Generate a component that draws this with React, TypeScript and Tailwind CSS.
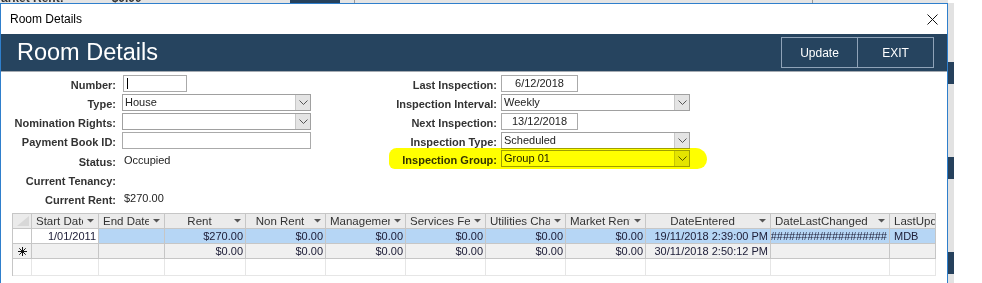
import React from 'react'

type Col = { label: string; w: number; center?: boolean; arrow?: boolean; align?: 'left' | 'right' }

const COLS: Col[] = [
  { label: 'Start Date', w: 67, arrow: true, align: 'right' },
  { label: 'End Date', w: 66, arrow: true, align: 'right' },
  { label: 'Rent', w: 81, center: true, arrow: true, align: 'right' },
  { label: 'Non Rent', w: 80, center: true, arrow: true, align: 'right' },
  { label: 'Management', w: 80, arrow: true, align: 'right' },
  { label: 'Services Fees', w: 80, arrow: true, align: 'right' },
  { label: 'Utilities Charges', w: 80, arrow: true, align: 'right' },
  { label: 'Market Rent', w: 80, arrow: true, align: 'right' },
  { label: 'DateEntered', w: 125, center: true, arrow: true, align: 'right' },
  { label: 'DateLastChanged', w: 119, arrow: true, align: 'right' },
  { label: 'LastUpdatedBy', w: 46, arrow: false, align: 'left' },
]

const ROW1 = ['1/01/2011', '', '$270.00', '$0.00', '$0.00', '$0.00', '$0.00', '$0.00', '19/11/2018 2:39:00 PM', '#####################', 'MDB']
const ROW2 = ['', '', '$0.00', '$0.00', '$0.00', '$0.00', '$0.00', '$0.00', '30/11/2018 2:50:12 PM', '', '']

function Chevron() {
  return (
    <svg width="9" height="5" viewBox="0 0 9 5" className="text-[#555]">
      <polyline points="0.5,0.5 4.5,4.5 8.5,0.5" fill="none" stroke="currentColor" strokeWidth="1" />
    </svg>
  )
}

function SortArrow() {
  return (
    <svg width="7" height="4" viewBox="0 0 7 4">
      <path d="M0 0 H7 L3.5 3.5 Z" fill="#555" />
    </svg>
  )
}

function TextBox({ w, value, center, caret }: { w: number; value?: string; center?: boolean; caret?: boolean }) {
  return (
    <div
      className={`h-[17px] border border-[#aaaaaa] bg-white flex items-center px-[3px] text-[11px] text-[#222] ${center ? 'justify-center' : ''}`}
      style={{ width: w }}
    >
      {caret && <span className="w-px h-[11px] bg-black" />}
      {value}
    </div>
  )
}

function Combo({ value }: { value?: string }) {
  return (
    <div className="h-[17px] w-[189px] border border-[#a0a0a0] bg-white flex items-stretch">
      <div className="flex-1 flex items-center px-[2px] text-[11px] text-[#222]">{value}</div>
      <div className="w-[15px] bg-[#e4e4e4] border-l border-[#c8c8c8] flex items-center justify-center">
        <Chevron />
      </div>
    </div>
  )
}

function Label({ children }: { children: React.ReactNode }) {
  return <span className="text-[11px] font-bold text-[#333]">{children}</span>
}

export default function App() {
  return (
    <div className="w-[982px] h-[283px] overflow-hidden bg-white font-['Liberation_Sans',Arial,sans-serif] flex flex-col">
      {/* background app peeking above */}
      <div className="h-[3px] shrink-0 flex overflow-hidden">
        <div className="w-[948px] flex items-end bg-[#e4e4e4]">
          <span className="-mb-[1px] ml-[1px] text-[12px] leading-none font-bold text-[#333]">arket Rent:</span>
          <span className="-mb-[1px] ml-[48px] text-[12px] leading-none font-bold text-[#333]">$0.00</span>
          <div className="ml-[148px] w-[50px] h-[3px] bg-[#26415c]" />
          <div className="ml-[14px] w-px h-[3px] bg-[#999]" />
          <div className="ml-[457px] w-px h-[3px] bg-[#999]" />
        </div>
        <div className="flex-1 bg-white" />
      </div>

      <div className="flex flex-1">
        {/* dialog window */}
        <div className="w-[948px] border-t border-l border-r border-[#2f7fcc] flex flex-col bg-white">
          {/* title bar */}
          <div className="h-[30px] flex items-center justify-between pl-[9px] pr-[9px]">
            <span className="text-[12px] text-black">Room Details</span>
            <svg width="11" height="11" viewBox="0 0 11 11">
              <path d="M0.5 0.5 L10.5 10.5 M10.5 0.5 L0.5 10.5" stroke="#111" strokeWidth="1" />
            </svg>
          </div>

          {/* header */}
          <div className="h-[38px] bg-[#26445f] border-b border-[#a5abb2] flex items-center justify-between pl-[16px] pr-[13px]">
            <span className="text-[23.5px] text-white leading-none">Room Details</span>
            <div className="flex h-[31px] border border-[#8fa3b8]">
              <div className="w-[76px] flex items-center justify-center text-[12px] text-white border-r border-[#8fa3b8]">Update</div>
              <div className="w-[75px] flex items-center justify-center text-[12px] text-white">EXIT</div>
            </div>
          </div>

          {/* form */}
          <div className="flex pt-[3px]">
            <div className="w-[340px] grid grid-cols-[115px_1fr] gap-x-[6px] auto-rows-[19px] items-start">
              <div className="text-right leading-[17px]"><Label>Number:</Label></div>
              <div className="pl-px"><TextBox w={64} caret /></div>
              <div className="text-right leading-[17px]"><Label>Type:</Label></div>
              <Combo value="House" />
              <div className="text-right leading-[17px]"><Label>Nomination Rights:</Label></div>
              <Combo />
              <div className="text-right leading-[17px]"><Label>Payment Book ID:</Label></div>
              <TextBox w={189} />
              <div className="text-right leading-[19px]"><Label>Status:</Label></div>
              <div className="text-[11px] text-[#222] leading-[19px] pl-[2px]">Occupied</div>
              <div className="text-right leading-[19px]"><Label>Current Tenancy:</Label></div>
              <div />
              <div className="text-right leading-[19px]"><Label>Current Rent:</Label></div>
              <div className="text-[11px] text-[#222] leading-[19px] pl-[2px]">$270.00</div>
            </div>

            <div className="relative grid grid-cols-[156px_1fr] gap-x-[4px] auto-rows-[19px] items-start">
              <div className="text-right leading-[17px]"><Label>Last Inspection:</Label></div>
              <TextBox w={77} value="6/12/2018" center />
              <div className="text-right leading-[17px]"><Label>Inspection Interval:</Label></div>
              <Combo value="Weekly" />
              <div className="text-right leading-[17px]"><Label>Next Inspection:</Label></div>
              <TextBox w={77} value="13/12/2018" center />
              <div className="text-right leading-[17px]"><Label>Inspection Type:</Label></div>
              <Combo value="Scheduled" />
              <div className="text-right leading-[17px] -mt-px"><Label>Inspection Group:</Label></div>
              <div className="-mt-px"><Combo value="Group 01" /></div>
              {/* highlighter stroke */}
              <div className="absolute left-[48px] top-[73px] w-[318px] h-[21px] bg-[#ffff00] mix-blend-multiply rounded-[8px_12px_10px_6px]" />
            </div>
          </div>

          {/* datasheet */}
          <div className="mt-[5px] ml-[11px] w-[924px] border-t border-l border-[#c6c6c6] text-[11px] text-[#20203a]">
            <div className="flex h-[15px] bg-[#ebebeb]">
              <div className="w-[19px] border-r border-b border-[#c6c6c6] flex items-end justify-end p-[2px]">
                <svg width="12" height="10" viewBox="0 0 12 10">
                  <path d="M12 0 L12 10 L0 10 Z" fill="#d8d8d8" />
                </svg>
              </div>
              {COLS.map((c) => (
                <div key={c.label} className="border-r border-b border-[#c6c6c6] flex items-center overflow-hidden" style={{ width: c.w }}>
                  <div className={`flex-1 overflow-hidden whitespace-nowrap pl-[4px] text-[11.5px] leading-[14px] text-[#333] ${c.center ? 'text-center' : ''}`}>
                    {c.label}
                  </div>
                  {c.arrow && (
                    <div className="w-[15px] shrink-0 flex items-center justify-center">
                      <SortArrow />
                    </div>
                  )}
                </div>
              ))}
            </div>

            <div className="flex h-[15px]">
              <div className="w-[19px] border-r border-b border-[#c6c6c6] bg-white" />
              {COLS.map((c, i) => (
                <div
                  key={c.label}
                  className={`border-r border-b border-[#c6c6c6] flex items-center overflow-hidden whitespace-nowrap px-[2px] leading-[14px] ${i === 0 ? 'bg-white' : 'bg-[#b6d6f5]'} ${c.align === 'left' ? 'justify-start pl-[4px]' : 'justify-end'}`}
                  style={{ width: c.w }}
                >
                  {ROW1[i]}
                </div>
              ))}
            </div>

            <div className="flex h-[15px] bg-[#f0f0f0]">
              <div className="w-[19px] border-r border-b border-[#c6c6c6] flex items-center justify-center">
                <svg width="9" height="9" viewBox="0 0 9 9">
                  <path d="M4.5 0 V9 M0 4.5 H9 M1.3 1.3 L7.7 7.7 M7.7 1.3 L1.3 7.7" stroke="#111" strokeWidth="1" />
                </svg>
              </div>
              {COLS.map((c, i) => (
                <div
                  key={c.label}
                  className="border-r border-b border-[#c6c6c6] flex items-center justify-end overflow-hidden whitespace-nowrap px-[2px] leading-[14px]"
                  style={{ width: c.w }}
                >
                  {ROW2[i]}
                </div>
              ))}
            </div>

            <div className="flex h-[17px] bg-white">
              <div className="w-[19px] border-r border-b border-[#e6e6e6] bg-white" />
              {COLS.map((c) => (
                <div key={c.label} className="border-r border-b border-[#e6e6e6]" style={{ width: c.w }} />
              ))}
            </div>
          </div>
        </div>

        {/* background app to the right */}
        <div className="w-[6px] flex flex-col bg-[#e2e2e2]">
          <div className="h-[59px]" />
          <div className="h-[22px] bg-[#26415c]" />
          <div className="h-[73px]" />
          <div className="h-[22px] bg-[#26415c]" />
          <div className="h-[73px]" />
          <div className="h-[22px] bg-[#26415c]" />
        </div>
        <div className="flex-1 bg-white" />
      </div>
    </div>
  )
}
